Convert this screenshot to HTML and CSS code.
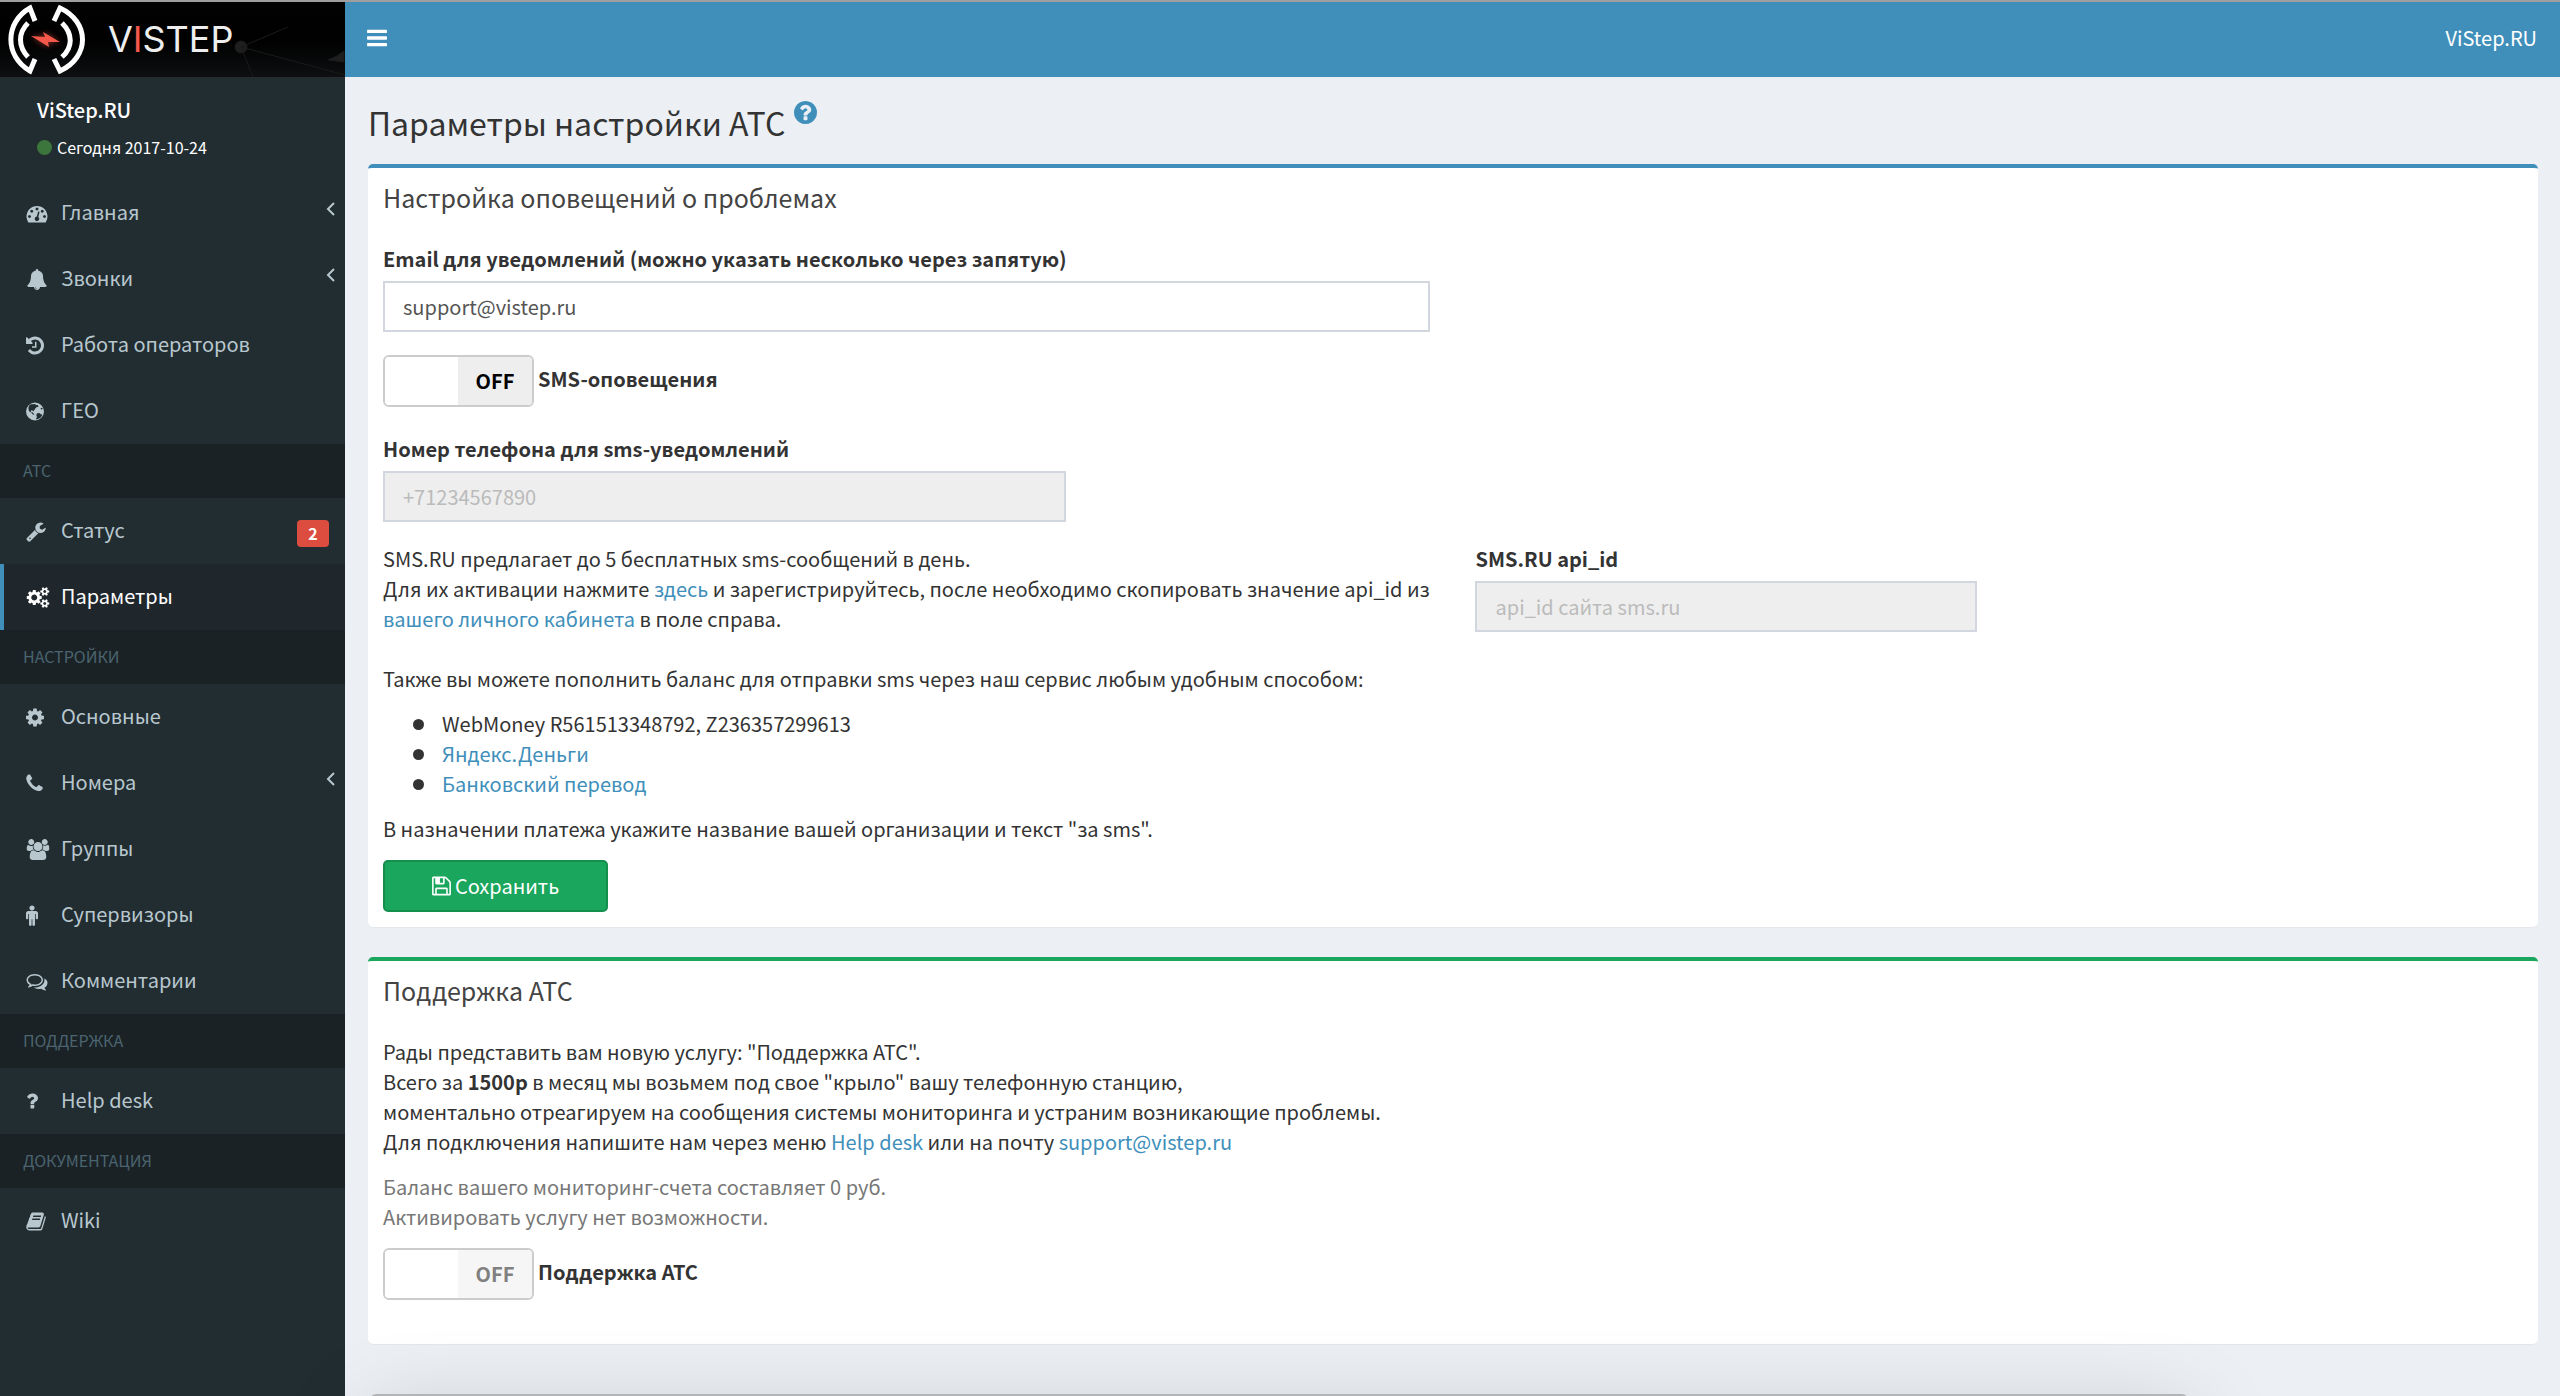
FILE: index.html
```html
<!DOCTYPE html>
<html lang="ru">
<head>
<meta charset="utf-8">
<title>Параметры настройки АТС</title>
<link rel="stylesheet" href="styles.css">
</head>
<body>
<svg class="sprite" aria-hidden="true">
  <symbol id="i-dash" viewBox="0 0 1792 1792"><path fill-rule="evenodd" d="M384 1152q0-53-37.500-90.500t-90.500-37.500-90.500 37.500-37.500 90.500 37.500 90.500 90.500 37.500 90.500-37.500 37.500-90.500zm192-448q0-53-37.500-90.500t-90.500-37.500-90.500 37.500-37.500 90.500 37.500 90.500 90.500 37.500 90.500-37.500 37.500-90.500zm428 481l101-382q6-26-7.500-48.500t-38.500-29.500-48 6.500-30 39.500l-101 382q-60 5-107 43.500t-63 98.500q-20 77 20 146t117 89 146-20 89-117q16-60-6-117t-72-91zm660-33q0-53-37.500-90.500t-90.500-37.500-90.500 37.500-37.500 90.500 37.500 90.500 90.500 37.500 90.500-37.500 37.500-90.500zm-640-640q0-53-37.500-90.500t-90.500-37.500-90.500 37.500-37.500 90.500 37.500 90.500 90.500 37.500 90.500-37.500 37.500-90.500zm448 192q0-53-37.500-90.500t-90.500-37.500-90.500 37.500-37.500 90.500 37.500 90.500 90.500 37.500 90.500-37.500 37.500-90.500zm320 448q0 261-141 483-19 29-54 29h-1402q-35 0-54-29-141-221-141-483 0-182 71-348t191-286 286-191 348-71 348 71 286 191 191 286 71 348z"/></symbol>
  <symbol id="i-bell" viewBox="0 0 1792 1792"><path d="M912 1696q0-16-16-16-59 0-101.500-42.500t-42.500-101.500q0-16-16-16t-16 16q0 73 51.500 124.500t124.500 51.500q16 0 16-16zm816-288q0 52-38 90t-90 38h-448q0 106-75 181t-181 75-181-75-75-181h-448q-52 0-90-38t-38-90q50-42 91-88t85-119.500 74.500-158.500 50-206 19.500-260q0-152 117-282.500t307-158.500q-8-19-8-39 0-40 28-68t68-28 68 28 28 68q0 20-8 39 190 28 307 158.500t117 282.500q0 139 19.500 260t50 206 74.500 158.500 85 119.500 91 88z"/></symbol>
  <symbol id="i-history" viewBox="0 0 1536 1792"><path d="M1536 896q0 156-61 298t-164 245-245 164-298 61q-172 0-327-72.500t-264-204.500q-7-10-6.500-22.500t8.500-20.500l137-138q10-9 25-9 16 2 23 12 73 95 179 147t225 52q104 0 198.500-40.500t163.500-109.500 109.500-163.500 40.500-198.500-40.500-198.500-109.500-163.500-163.500-109.500-198.500-40.500q-98 0-188 35.500t-160 101.500l137 138q31 30 14 69-17 40-59 40h-448q-26 0-45-19t-19-45v-448q0-42 40-59 39-17 69 14l130 129q107-101 244.500-156.500t284.500-55.500q156 0 298 61t245 164 164 245 61 298zm-640-288v448q0 14-9 23t-23 9h-320q-14 0-23-9t-9-23v-64q0-14 9-23t23-9h224v-352q0-14 9-23t23-9h64q14 0 23 9t9 23z"/></symbol>
  <symbol id="i-globe" viewBox="0 0 1536 1792"><path fill-rule="evenodd" d="M768 128a768 768 0 1 0 0 1536a768 768 0 1 0 0-1536zM610 285q60-20 160-22l70 45-50 40 80 25 60-55 110 25-40 60 90 60-95 45-110 20-60 95-75 50-5 75-75 60-35 80-65-30-55-95-90 60-20 95 80 45 60-25 15 75 80 30 25 110 85 35-85 5-115-85-95-130-140-60-75-110-30-175 10-125 60-115 105-85 45-25zM900 1100l110-80 160 30 95 85 140 45-70 130-115 125-150 90-190 50-20-110 90-90-60-105zM1240 620l110-50 80 70-30 70-110 20z"/></symbol>
  <symbol id="i-wrench" viewBox="0 0 1664 1792"><path d="M384 1472q0-26-19-45t-45-19-45 19-19 45 19 45 45 19 45-19 19-45zm644-420l-682 682q-37 37-90 37-52 0-91-37l-106-108q-38-36-38-90 0-53 38-91l681-681q39 98 114.500 173.500t173.500 114.500zm634-435q0 39-23 106-47 134-164.500 217.500t-258.500 83.500q-185 0-316.500-131.500t-131.500-316.500 131.500-316.500 316.500-131.500q58 0 121.500 16.500t107.500 46.500q16 11 16 28t-16 28l-293 169v224l193 107q5-3 79-48.500t135.500-81 70.500-35.500q15 0 23.500 10t8.500 25z"/></symbol>
  <symbol id="i-cog" viewBox="0 0 1536 1792"><path d="M1024 896q0-106-75-181t-181-75-181 75-75 181 75 181 181 75 181-75 75-181zm512-109v222q0 12-8 23t-20 13l-185 28q-19 54-39 91 35 50 107 138 10 12 10 25t-9 23q-27 37-99 108t-94 71q-12 0-26-9l-138-108q-44 23-91 38-16 136-29 186-7 28-36 28h-222q-14 0-24.500-8.500t-11.500-21.500l-28-184q-49-16-90-37l-141 107q-10 9-25 9-14 0-25-11-126-114-165-168-7-10-7-23 0-12 8-23 15-21 51-66.500t54-70.500q-27-50-41-99l-183-27q-13-2-21-12.500t-8-23.500v-222q0-12 8-23t19-13l186-28q14-46 39-92-40-57-107-138-10-12-10-24 0-10 9-23 26-36 98.500-107.500t94.500-71.500q13 0 26 10l138 107q44-23 91-38 16-136 29-186 7-28 36-28h222q14 0 24.500 8.500t11.500 21.500l28 184q49 16 90 37l142-107q9-9 24-9 13 0 25 10 129 119 165 170 7 8 7 22 0 12-8 23-15 21-51 66.500t-54 70.500q26 50 41 98l183 28q13 2 21 12.500t8 23.500z"/></symbol>
  <symbol id="i-cogs" viewBox="0 0 1920 1792"><path d="M896 896q0-106-75-181t-181-75-181 75-75 181 75 181 181 75 181-75 75-181zm768 512q0-52-38-90t-90-38-90 38-38 90q0 53 37.500 90.500t90.500 37.500 90.500-37.500 37.500-90.500zm0-1024q0-52-38-90t-90-38-90 38-38 90q0 53 37.500 90.500t90.500 37.500 90.500-37.500 37.500-90.500zm-384 421v185q0 10-7 19.500t-16 10.500l-155 24q-11 35-32 76 34 48 90 115 7 11 7 20 0 12-7 19-23 30-82.500 89.500t-78.500 59.500q-11 0-21-7l-115-90q-37 19-77 31-11 108-23 155-7 24-30 24h-186q-11 0-20-7.500t-10-17.500l-23-153q-34-10-75-31l-118 89q-7 7-20 7-11 0-21-8-144-133-144-160 0-9 7-19 10-14 41-53t47-61q-23-44-35-82l-152-24q-10-1-17-9.500t-7-19.500v-185q0-10 7-19.500t16-10.500l155-24q11-35 32-76-34-48-90-115-7-11-7-20 0-12 7-20 22-30 82-89t79-59q11 0 21 7l115 90q34-18 77-32 11-108 23-154 7-24 30-24h186q11 0 20 7.500t10 17.500l23 153q34 10 75 31l118-89q8-7 20-7 11 0 21 8 144 133 144 160 0 8-7 19-12 16-42 54t-45 60q23 48 34 82l152 23q10 2 17 10.500t7 19.500zm640 533v140q0 16-149 31-12 27-30 52 51 113 51 138 0 4-4 7-122 71-124 71-8 0-46-47t-52-68q-20 2-30 2t-30-2q-14 21-52 68t-46 47q-2 0-124-71-4-3-4-7 0-25 51-138-18-25-30-52-149-15-149-31v-140q0-16 149-31 13-29 30-52-51-113-51-138 0-4 4-7 4-2 35-20t59-34 30-16q8 0 46 46.500t52 67.500q20-2 30-2t30 2q51-71 92-112l6-2q4 0 124 70 4 3 4 7 0 25-51 138 17 23 30 52 149 15 149 31zm0-1024v140q0 16-149 31-12 27-30 52 51 113 51 138 0 4-4 7-122 71-124 71-8 0-46-47t-52-68q-20 2-30 2t-30-2q-14 21-52 68t-46 47q-2 0-124-71-4-3-4-7 0-25 51-138-18-25-30-52-149-15-149-31v-140q0-16 149-31 13-29 30-52-51-113-51-138 0-4 4-7 4-2 35-20t59-34 30-16q8 0 46 46.500t52 67.500q20-2 30-2t30 2q51-71 92-112l6-2q4 0 124 70 4 3 4 7 0 25-51 138 17 23 30 52 149 15 149 31z"/></symbol>
  <symbol id="i-phone" viewBox="0 0 1408 1792"><path d="M1408 1240q0 27-10 70.500t-21 68.500q-21 50-122 106-94 51-186 51-27 0-53-3.500t-57.500-12.500-47-14.500-55.500-20.500-49-18q-98-35-175-83-127-79-264-216t-216-264q-48-77-83-175-3-9-18-49t-20.500-55.500-14.500-47-12.500-57.500-3.500-53q0-92 51-186 56-101 106-122 25-11 68.500-21t70.500-10q14 0 21 3 18 6 53 76 11 19 30 54t35 63.500 31 53.500q3 4 17.500 25t21.500 35.500 7 28.500q0 20-28.500 50t-62 55-62 53-28.500 46q0 9 5 22.500t8.500 20.500 14 24 11.500 19q76 137 174 235t235 174q2 1 19 11.500t24 14 20.500 8.500 22.500 5q18 0 46-28.500t53-62 55-62 50-28.500q14 0 28.500 7t35.500 21.500 25 17.500q25 15 53.500 31t63.500 35 54 30q70 35 76 53 3 7 3 21z"/></symbol>
  <symbol id="i-group" viewBox="0 0 1920 1792"><path d="M593 896q-162 5-265 128h-134q-82 0-138-40.500t-56-118.500q0-353 124-353 6 0 43.500 21t97.500 42.500 119 21.500q67 0 133-23-5 37-5 66 0 159 81 287zm1071 637q0 120-73 189.500t-194 69.500h-874q-121 0-194-69.500t-73-189.500q0-53 3.500-103.500t14-109 26.500-108.500 43-97.500 62-81 85.500-53.500 111.500-20q10 0 43 21.500t73 48 107 48 135 21.500 135-21.500 107-48 73-48 43-21.500q61 0 111.500 20t85.500 53.500 62 81 43 97.500 26.500 108.500 14 109 3.500 103.500zm-1024-1277q0 106-75 181t-181 75-181-75-75-181 75-181 181-75 181 75 75 181zm704 384q0 159-112.500 271.500t-271.500 112.500-271.500-112.500-112.500-271.500 112.500-271.500 271.500-112.500 271.500 112.500 112.500 271.500zm576 225q0 78-56 118.500t-138 40.500h-134q-103-123-265-128 81-128 81-287 0-29-5-66 66 23 133 23 59 0 119-21.500t97.500-42.500 43.500-21q124 0 124 353zm-128-609q0 106-75 181t-181 75-181-75-75-181 75-181 181-75 181 75 75 181z"/></symbol>
  <symbol id="i-male" viewBox="0 0 1024 1792"><path d="M1024 704v416q0 40-28 68t-68 28-68-28-28-68v-352h-64v912q0 46-33 79t-79 33-79-33-33-79v-464h-64v464q0 46-33 79t-79 33-79-33-33-79v-912h-64v352q0 40-28 68t-68 28-68-28-28-68v-416q0-80 56-136t136-56h640q80 0 136 56t56 136zm-288-448q0 93-65.500 158.500t-158.500 65.500-158.500-65.500-65.500-158.500 65.500-158.500 158.500-65.500 158.500 65.500 65.500 158.500z"/></symbol>
  <symbol id="i-comments" viewBox="0 0 1792 1792"><path d="M704 384q-153 0-286 52t-211.500 141-78.500 191q0 82 53 158t149 132l97 56-35 84q34-20 62-39l44-31 53 10q78 14 153 14 153 0 286-52t211.500-141 78.500-191-78.500-191-211.500-141-286-52zm0-128q191 0 353.500 68.500t256.500 186.500 94 257-94 257-256.500 186.500-353.500 68.500q-86 0-176-16-124 88-278 128-36 9-86 16h-3q-11 0-20.500-8t-11.500-21q-1-3-1-6.500t.5-6.500 2-6l2.500-5 3.500-5.500 4-5 4.500-5 4-4.500q5-6 23-25t26-29.500 22.500-29 25-38.500 20.500-44q-124-72-195-177t-71-224q0-139 94-257t256.500-186.500 353.500-68.500zm822 1169q10 24 20.500 44t25 38.500 22.500 29 26 29.500 23 25q1 1 4 4.500t4.500 5 4 5 3.500 5.500l2.500 5 2 6 .5 6.500-1 6.500q-3 14-13 22t-22 7q-50-7-86-16-154-40-278-128-90 16-176 16-271 0-472-132 58 4 88 4 161 0 309-45t264-129q125-92 192-212t67-254q0-77-23-152 129 71 204 178t75 230q0 120-71 224.500t-195 176.500z"/></symbol>
  <symbol id="i-question" viewBox="0 0 1024 1792"><path d="M704 1208v240q0 16-12 28t-28 12h-240q-16 0-28-12t-12-28v-240q0-16 12-28t28-12h240q16 0 28 12t12 28zm316-600q0 54-15.500 101t-35 76.500-55 59.500-57.500 43.500-61 35.500q-41 23-68.500 65t-27.500 67q0 17-12 32.500t-28 15.500h-240q-15 0-25.500-18.500t-10.500-37.500v-45q0-83 65-156.500t143-108.500q59-27 84-56t25-76q0-42-46.500-74t-107.500-32q-65 0-108 29-35 25-107 115-13 16-31 16-12 0-25-8l-164-125q-13-10-15.500-25t5.500-28q160-266 464-266 80 0 161 31t146 83 106 127.500 41 158.500z"/></symbol>
  <symbol id="i-book" viewBox="0 0 1664 1792"><path d="M1639 478q40 57 18 129l-275 906q-19 64-76.500 107.500t-122.500 43.500h-923q-77 0-148.500-53.500t-99.500-131.500q-24-67-2-127 0-4 3-27t4-37q1-8-3-21.500t-3-19.500q2-11 8-21t16.500-23.500 16.500-23.500q23-38 45-91.500t30-91.500q3-10 .5-30t-.5-28q3-11 17-28t17-23q21-36 42-92t25-90q1-9-2.500-32t.5-28q4-13 22-30.500t22-22.500q19-26 42.500-84.500t27.500-96.500q1-8-3-25.500t-2-26.500q2-8 9-18t18-23 17-21q8-12 16.500-30.500t15-35 16-36 19.500-32 26.500-23.500 36-11.500 47.500 5.500l-1 3q38-9 51-9h761q74 0 114 56t18 130l-274 906q-36 119-71.500 153.500t-128.500 34.500h-869q-27 0-38 15-11 16-1 43 24 70 144 70h923q29 0 56-15.500t35-41.500l300-987q7-22 5-57 38 15 59 43zm-1064 2q-4 13 2 22.500t20 9.500h608q13 0 25.500-9.500t16.500-22.500l21-64q4-13-2-22.500t-20-9.500h-608q-13 0-25.500 9.500t-16.500 22.500zm-83 256q-4 13 2 22.500t20 9.500h608q13 0 25.500-9.500t16.500-22.500l21-64q4-13-2-22.500t-20-9.500h-608q-13 0-25.500 9.500t-16.500 22.500z"/></symbol>
  <symbol id="i-left" viewBox="0 0 12 20"><path d="M9 4 3 10l6 6" fill="none" stroke="currentColor" stroke-width="2"/></symbol>
  <symbol id="i-bars" viewBox="0 0 1536 1792"><path d="M1536 1344v128q0 26-19 45t-45 19h-1408q-26 0-45-19t-19-45v-128q0-26 19-45t45-19h1408q26 0 45 19t19 45zm0-512v128q0 26-19 45t-45 19h-1408q-26 0-45-19t-19-45v-128q0-26 19-45t45-19h1408q26 0 45 19t19 45zm0-512v128q0 26-19 45t-45 19h-1408q-26 0-45-19t-19-45v-128q0-26 19-45t45-19h1408q26 0 45 19t19 45z"/></symbol>
  <symbol id="i-help" viewBox="0 0 1536 1792"><path d="M896 1376v-192q0-14-9-23t-23-9h-192q-14 0-23 9t-9 23v192q0 14 9 23t23 9h192q14 0 23-9t9-23zm256-672q0-88-55.500-163t-138.500-116-170-41q-243 0-371 213-15 24 8 42l132 100q7 6 19 6 16 0 25-12 53-68 86-92 34-24 86-24 48 0 85.500 26t37.500 59q0 38-20 61t-68 45q-63 28-115.500 86.500t-52.500 125.500v36q0 14 9 23t23 9h192q14 0 23-9t9-23q0-19 21.500-49.500t54.500-49.500q32-18 49-28.500t46-35 44.500-48 28-60.500 12.500-81zm384 192q0 209-103 385.500t-279.500 279.500-385.500 103-385.500-103-279.500-279.500-103-385.500 103-385.500 279.500-279.500 385.500-103 385.500 103 279.500 279.500 103 385.500z"/></symbol>
  <symbol id="i-save" viewBox="0 0 1536 1792"><path d="M384 1536h768v-384h-768v384zm896 0h128v-896q0-14-10-38.500t-20-34.500l-281-281q-10-10-34-20t-39-10v416q0 40-28 68t-68 28h-576q-40 0-68-28t-28-68v-416h-128v1280h128v-416q0-40 28-68t68-28h832q40 0 68 28t28 68v416zm-384-928v-320q0-13-9.500-22.500t-22.500-9.500h-192q-13 0-22.500 9.500t-9.500 22.500v320q0 13 9.500 22.500t22.500 9.500h192q13 0 22.500-9.500t9.500-22.500zm640 32v928q0 40-28 68t-68 28h-1344q-40 0-68-28t-28-68v-1344q0-40 28-68t68-28h928q40 0 88 20t76 48l280 280q28 28 48 76t20 88z"/></symbol>
</svg>

<div class="app">
  <aside class="sidebar">
    <a class="logo" href="#" aria-label="ViStep">
      <svg class="logo-mark" viewBox="0 0 78 73" aria-hidden="true">
        <g fill="none" stroke="#fff">
          <path stroke-width="5" d="M27 18 22 5C-3 19-4 53 22 68l5-12M46 18l6-13C82 19 82 54 52 68l-6-12"/>
          <path stroke-width="5" d="M20 20C10 30 10 43 20 54M54 20c11 11 11 24 0 34"/>
        </g>
        <path class="bolt-glow" d="M23 33l14 1-1-4 16 9-12 0 1 5z"/>
        <path fill="#f4584a" d="M23 33l14 1-2-5 17 10-12 0 1 5z"/>
      </svg>
      <span class="wordmark">V<b>I</b>STEP</span>
      <svg class="logo-net" viewBox="0 0 120 50" aria-hidden="true"><g stroke="#1b1b1b" stroke-width="1" fill="#1f1f1f"><circle cx="16" cy="20" r="6"/><path fill="none" d="M16 20 105-18M16 20 120 48M16 20 28 50"/><path d="M103 33 112 29 119 24V35Z"/></g></svg>
    </a>
    <div class="user">
      <strong>ViStep.RU</strong>
      <span class="date"><i class="dot"></i>Сегодня 2017-10-24</span>
    </div>
    <nav class="menu">
      <a href="#"><svg class="w18"><use href="#i-dash"/></svg><span>Главная</span><svg class="arrow"><use href="#i-left"/></svg></a>
      <a href="#"><svg class="w18"><use href="#i-bell"/></svg><span>Звонки</span><svg class="arrow"><use href="#i-left"/></svg></a>
      <a href="#"><svg class="w15"><use href="#i-history"/></svg><span>Работа операторов</span></a>
      <a href="#"><svg class="w15"><use href="#i-globe"/></svg><span>ГЕО</span></a>
      <h2>АТС</h2>
      <a href="#"><svg class="w16"><use href="#i-wrench"/></svg><span>Статус</span><em class="badge">2</em></a>
      <a href="#" class="active"><svg class="w19"><use href="#i-cogs"/></svg><span>Параметры</span></a>
      <h2>НАСТРОЙКИ</h2>
      <a href="#"><svg class="w15"><use href="#i-cog"/></svg><span>Основные</span></a>
      <a href="#"><svg class="w14"><use href="#i-phone"/></svg><span>Номера</span><svg class="arrow"><use href="#i-left"/></svg></a>
      <a href="#"><svg class="w19"><use href="#i-group"/></svg><span>Группы</span></a>
      <a href="#"><svg class="w10"><use href="#i-male"/></svg><span>Супервизоры</span></a>
      <a href="#"><svg class="w18"><use href="#i-comments"/></svg><span>Комментарии</span></a>
      <h2>ПОДДЕРЖКА</h2>
      <a href="#"><svg class="w10"><use href="#i-question"/></svg><span>Help desk</span></a>
      <h2>ДОКУМЕНТАЦИЯ</h2>
      <a href="#"><svg class="w16"><use href="#i-book"/></svg><span>Wiki</span></a>
    </nav>
  </aside>

  <div class="page">
    <header class="topbar">
      <button type="button" class="burger" aria-label="Меню"><svg><use href="#i-bars"/></svg></button>
      <a href="#">ViStep.RU</a>
    </header>
    <main class="content">
      <h1>Параметры настройки АТС <a href="#" class="help" aria-label="Справка"><svg><use href="#i-help"/></svg></a></h1>

      <form class="box box-primary">
        <h3>Настройка оповещений о проблемах</h3>
        <div class="box-body">
          <div class="field half">
            <label for="email">Email для уведомлений (можно указать несколько через запятую)</label>
            <input id="email" type="text" value="support@vistep.ru">
          </div>
          <label class="switch-row"><span class="switch"><input type="checkbox"><span class="knob"></span><span class="state">OFF</span></span><span class="caption">SMS-оповещения</span></label>
          <div class="field third">
            <label for="phone">Номер телефона для sms-уведомлений</label>
            <input id="phone" type="text" placeholder="+71234567890" disabled>
          </div>
          <div class="half info">
            <p>SMS.RU предлагает до 5 бесплатных sms-сообщений в день.<br>Для их активации нажмите <a href="#">здесь</a> и зарегистрируйтесь, после необходимо скопировать значение api_id из<br><a href="#">вашего личного кабинета</a> в поле справа.<br><br>Также вы можете пополнить баланс для отправки sms через наш сервис любым удобным способом:</p>
            <ul>
              <li>WebMoney R561513348792, Z236357299613</li>
              <li><a href="#">Яндекс.Деньги</a></li>
              <li><a href="#">Банковский перевод</a></li>
            </ul>
            <p>В назначении платежа укажите название вашей организации и текст "за sms".</p>
          </div>
          <div class="field quarter">
            <label for="api">SMS.RU api_id</label>
            <input id="api" type="text" placeholder="api_id сайта sms.ru" disabled>
          </div>
          <button type="submit" class="save"><svg><use href="#i-save"/></svg>Сохранить</button>
        </div>
      </form>

      <section class="box box-success">
        <h3>Поддержка АТС</h3>
        <div class="box-body">
          <div class="info support">
            <p>Рады представить вам новую услугу: "Поддержка АТС".<br>Всего за <b>1500р</b> в месяц мы возьмем под свое "крыло" вашу телефонную станцию,<br>моментально отреагируем на сообщения системы мониторинга и устраним возникающие проблемы.<br>Для подключения напишите нам через меню <a href="#">Help desk</a> или на почту <a href="#">support@vistep.ru</a></p>
            <p class="muted">Баланс вашего мониторинг-счета составляет 0 руб.<br>Активировать услугу нет возможности.</p>
          </div>
          <label class="switch-row off"><span class="switch"><input type="checkbox" disabled><span class="knob"></span><span class="state">OFF</span></span><span class="caption">Поддержка АТС</span></label>
        </div>
      </section>
    </main>
  </div>
</div>
<div class="window-shadow"></div>
</body>
</html>
```
FILE: styles.css
```css
* { box-sizing: border-box; }
html { height: 100%; background: #777; }
body {
  margin: 0;
  min-height: 100%;
  display: flex;
  overflow: hidden;
  background: #ecf0f5;
  border-top: 2px solid #9f9f9f;
  border-radius: 0 0 9px 9px;
  color: #333;
  font: 20px/30px "Noto Sans CJK SC", "Noto Sans", sans-serif;
}
a { color: #408fbb; text-decoration: none; }
svg { fill: currentColor; display: block; flex: none; }
.sprite { position: absolute; width: 0; height: 0; }
h1, h2, h3, p, ul { margin: 0; font-weight: 400; }
input, button { font: inherit; }

.app { flex: 1; display: flex; }
.sidebar { width: 345px; flex: none; background: #222d32; }

.logo {
  position: relative;
  display: flex;
  align-items: center;
  height: 75px;
  padding-left: 8px;
  gap: 22px;
  overflow: hidden;
  background: linear-gradient(#030303, #000 50%, #0d0f11);
}
.logo-mark { width: 78px; height: 73px; }
.bolt-glow { fill: #f4584a; filter: blur(3px); opacity: .6; }
.wordmark { z-index: 1; padding-bottom: 2px; color: #eee; font: 36px/70px Inter, sans-serif; }
.wordmark b { font-weight: 400; color: #f4584a; }
.logo-net { position: absolute; right: 0; bottom: 0; width: 120px; height: 50px; }

.user { display: flex; flex-direction: column; height: 103px; padding: 18px 37px 0; color: #fff; }
.user strong { font-weight: 500; }
.date { display: flex; align-items: center; gap: 5px; margin-top: 7px; font-size: 16px; }
.dot { width: 15px; height: 15px; border-radius: 50%; background: #3d763d; }

.menu a {
  display: flex;
  align-items: center;
  height: 66px;
  padding: 0 8px 2px 22px;
  border-left: 4px solid transparent;
  color: #b8c7ce;
}
.menu a span { flex: 1; }
.menu svg { height: 21px; margin-top: 2px; }
.menu .active { color: #fff; background: #1f272d; border-color: #408fbb; }
.w10 { width: 12px; margin-right: 23px; }
.w14 { width: 17px; margin-right: 18px; }
.w15 { width: 18px; margin-right: 17px; }
.w16 { width: 20px; margin-right: 15px; }
.w18 { width: 22px; margin-right: 13px; }
.w19 { width: 24px; margin-right: 11px; }
.menu .arrow { width: 12px; height: 20px; margin-top: -6px; }
.badge {
  width: 32px;
  height: 27px;
  margin: 6px 8px 0 0;
  border-radius: 4px;
  background: #dc4c3f;
  color: #fff;
  font: 700 16px/27px "Noto Sans CJK SC", sans-serif;
  text-align: center;
}
.menu h2 { height: 54px; padding-left: 23px; background: #1a2226; color: #4b646f; font-size: 16px; line-height: 52px; }

.page { flex: 1; min-width: 0; }
.topbar { display: flex; align-items: center; justify-content: space-between; height: 75px; padding: 0 23px 3px 22px; background: #408fbb; color: #fff; }
.topbar a { color: #fff; }
.burger { padding: 0; border: 0; background: none; color: inherit; }
.burger svg { width: 20px; height: 24px; }

.content { padding: 20px 22px 50px 23px; }
h1 { display: flex; height: 52px; margin-bottom: 15px; font-size: 32px; line-height: 50px; }
.help { margin: 2px 0 0 9px; }
.help svg { width: 23px; height: 27px; }

.box { margin-bottom: 30px; border-top: 4px solid; border-radius: 5px; background: #fff; box-shadow: 0 1px 1px rgba(0, 0, 0, .04); }
.box-primary { border-color: #408fbb; }
.box-success { border-color: #1aa65c; }
.box h3 { padding: 14px 15px 0; color: #444; font-size: 25px; line-height: 30px; }
.box-body { display: grid; grid-template-columns: repeat(12, 1fr); column-gap: 45px; padding: 32px 15px 15px; }
.box-body > * { grid-column: 1 / -1; }
.box-body .half { grid-column: 1 / span 6; }
.box-body .third { grid-column: 1 / span 4; }
.box-body .quarter { grid-column: 7 / span 3; }

.field label { display: block; margin-bottom: 7px; font-weight: 700; }
.field input {
  display: block;
  width: 100%;
  height: 51px;
  padding: 0 18px;
  border: 2px solid #d2d6de;
  border-radius: 0;
  background: #fff;
  color: #555;
}
.field input:disabled { background: #eee; }
.field input::placeholder { color: #bbb; }

.switch-row { display: flex; align-items: center; gap: 4px; margin: 23px 0 27px; font-weight: 700; }
.switch { display: flex; width: 151px; height: 52px; overflow: hidden; border: 2px solid #ccc; border-radius: 6px; line-height: 48px; }
.switch input { position: absolute; opacity: 0; }
.knob { width: 73px; background: #fff; }
.state { flex: 1; background: #eee; color: #000; text-align: center; }
.off .state { background: #f6f6f6; color: #808080; }
.caption { padding-bottom: 4px; }

.third { margin-bottom: 22px; }
.info { white-space: nowrap; }
.info p { margin-bottom: 15px; }
.info p:last-child { margin-bottom: 16px; }
.info ul { margin-bottom: 15px; padding-left: 30px; list-style: none; }
.info li { display: flex; align-items: center; gap: 18px; }
.info li::before { content: ""; width: 11px; height: 11px; border-radius: 50%; background: #333; }
.muted { color: #777; }
.save {
  display: flex;
  align-items: center;
  justify-content: center;
  gap: 4px;
  width: 225px;
  height: 52px;
  border: 2px solid #148f4e;
  border-radius: 5px;
  background: #1aa65c;
  color: #fff;
}
.save svg { width: 19px; height: 22px; }
.off { margin: 0 0 29px; }

.window-shadow {
  position: fixed;
  left: 370px;
  right: 372px;
  bottom: -48px;
  height: 50px;
  border-radius: 6px;
  background: #b4b4b6;
  box-shadow: 0 30px 90px rgba(0, 0, 0, .25);
  pointer-events: none;
}
```
